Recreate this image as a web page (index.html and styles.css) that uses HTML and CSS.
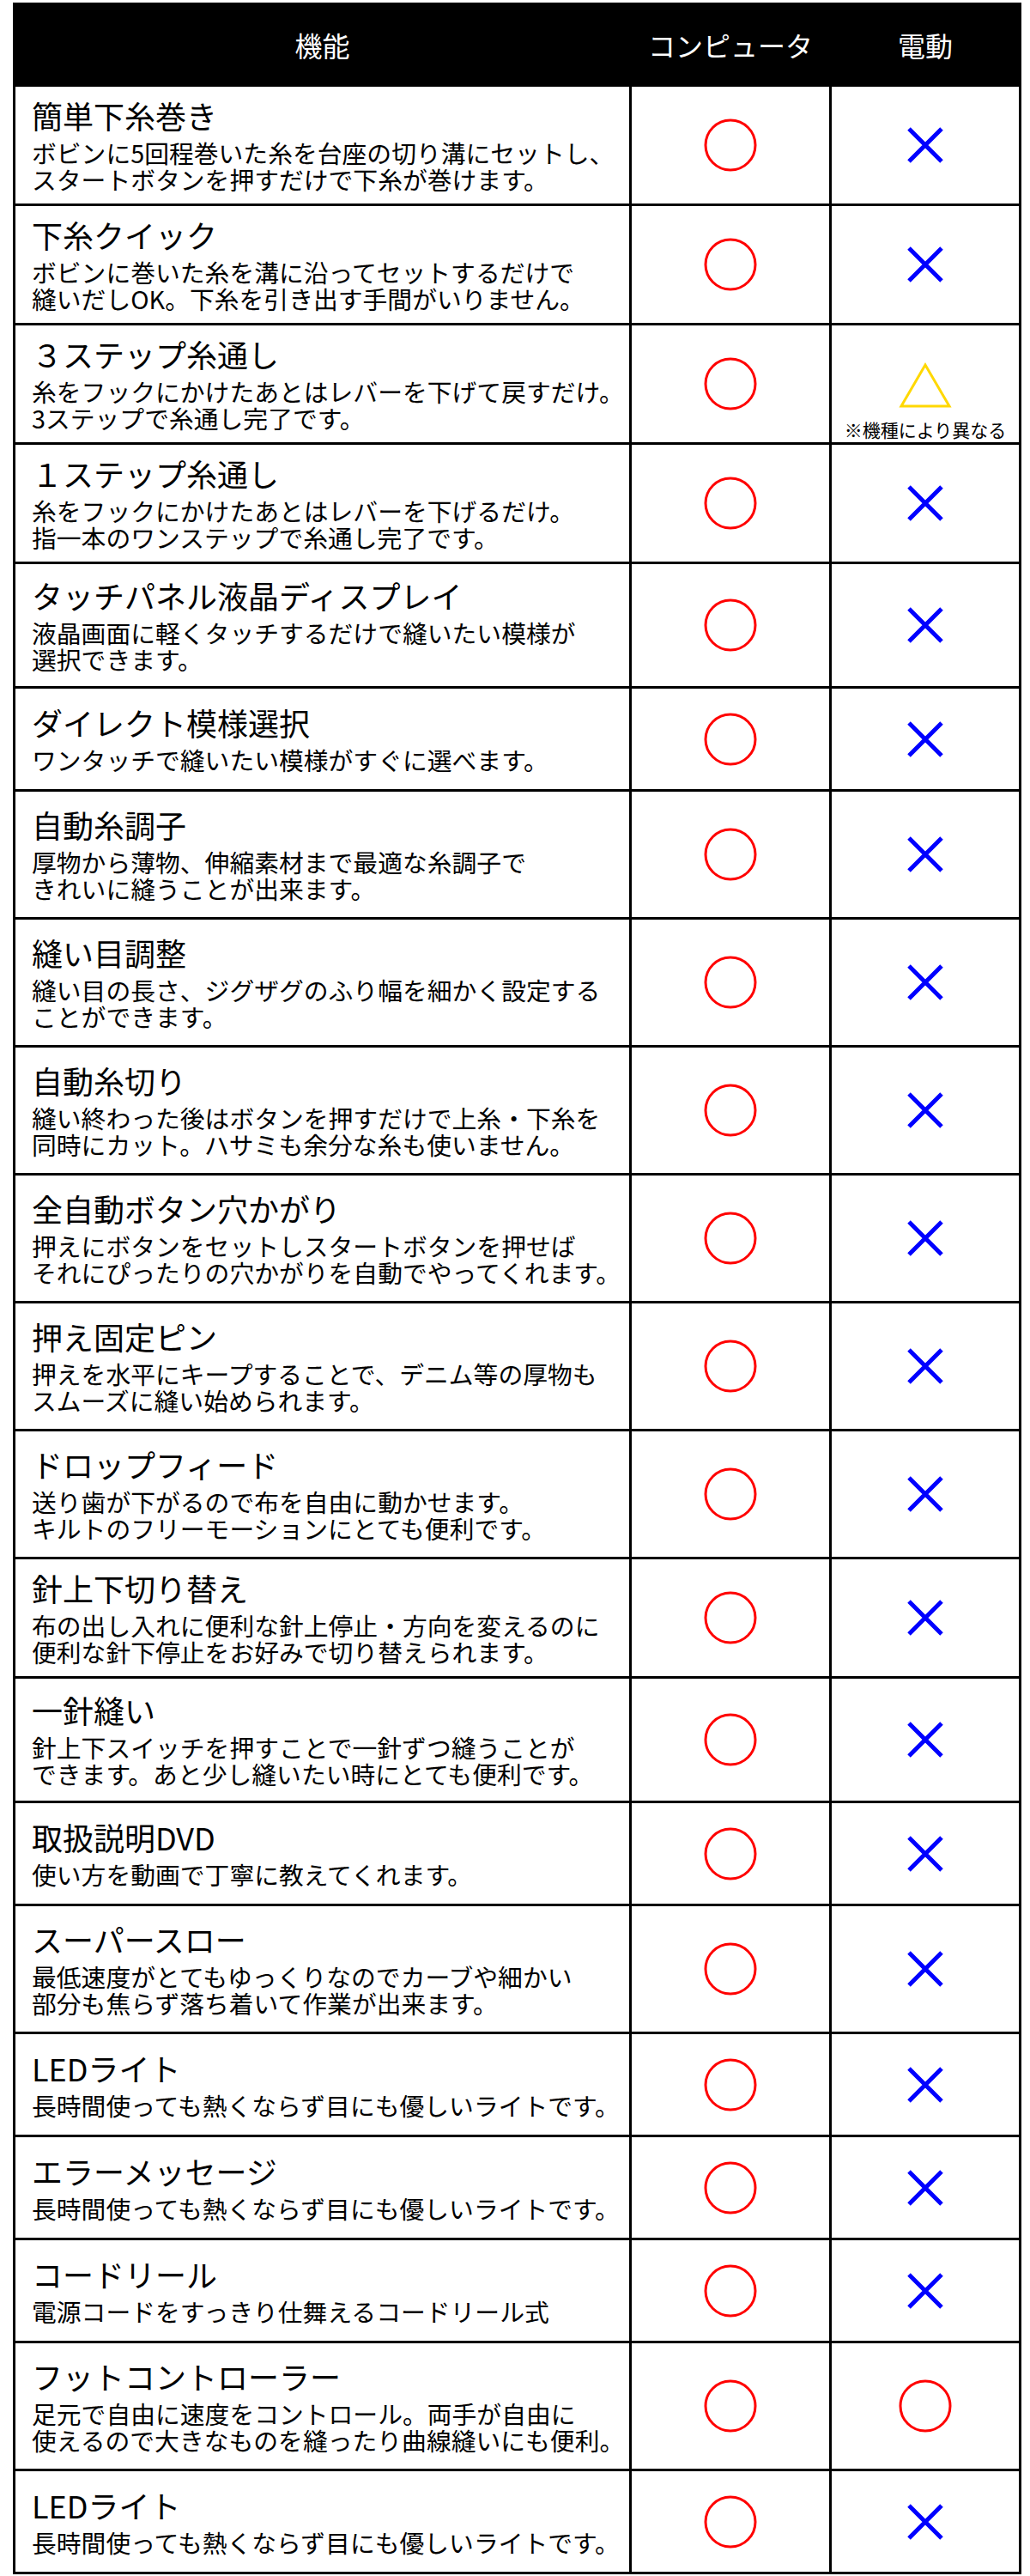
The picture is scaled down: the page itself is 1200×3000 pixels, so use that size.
FILE: index.html
```html
<!DOCTYPE html>
<html lang="ja">
<head>
<meta charset="utf-8">
<title>機能比較</title>
<link rel="stylesheet" href="styles.css">
</head>
<body>
<svg class="defs" width="0" height="0" aria-hidden="true">
  <defs>
    <symbol id="maru" viewBox="0 0 64 64"><circle cx="32" cy="32" r="29" fill="none" stroke="#ff0000" stroke-width="3"/></symbol>
    <symbol id="batsu" viewBox="0 0 44 44"><path d="M3 3 L41 41 M41 3 L3 41" fill="none" stroke="#0000ff" stroke-width="5"/></symbol>
    <symbol id="sankaku" viewBox="0 0 62 54"><polygon points="31,3 59,51 3,51" fill="none" stroke="#ffd800" stroke-width="3"/></symbol>
  </defs>
</svg>
<table class="spec">
  <colgroup><col class="c-feat"><col class="c-pc"><col class="c-el"></colgroup>
  <thead>
    <tr><th>機能</th><th>コンピュータ</th><th>電動</th></tr>
  </thead>
  <tbody>
    <tr class="tight"><td class="feat"><div class="name">簡単下糸巻き</div><div class="desc">ボビンに5回程巻いた糸を台座の切り溝にセットし、<br>スタートボタンを押すだけで下糸が巻けます。</div></td>
      <td class="mark"><svg class="o"><use href="#maru"/></svg></td><td class="mark"><svg class="x"><use href="#batsu"/></svg></td></tr>
    <tr class="tight"><td class="feat"><div class="name">下糸クイック</div><div class="desc">ボビンに巻いた糸を溝に沿ってセットするだけで<br>縫いだしOK。下糸を引き出す手間がいりません。</div></td>
      <td class="mark"><svg class="o"><use href="#maru"/></svg></td><td class="mark"><svg class="x"><use href="#batsu"/></svg></td></tr>
    <tr class="tight"><td class="feat"><div class="name">３ステップ糸通し</div><div class="desc">糸をフックにかけたあとはレバーを下げて戻すだけ。<br>3ステップで糸通し完了です。</div></td>
      <td class="mark"><svg class="o"><use href="#maru"/></svg></td><td class="mark partial"><div class="partial-box"><svg class="t"><use href="#sankaku"/></svg><span class="note">※機種により異なる</span></div></td></tr>
    <tr class="tight"><td class="feat"><div class="name">１ステップ糸通し</div><div class="desc">糸をフックにかけたあとはレバーを下げるだけ。<br>指一本のワンステップで糸通し完了です。</div></td>
      <td class="mark"><svg class="o"><use href="#maru"/></svg></td><td class="mark"><svg class="x"><use href="#batsu"/></svg></td></tr>
    <tr><td class="feat"><div class="name">タッチパネル液晶ディスプレイ</div><div class="desc">液晶画面に軽くタッチするだけで縫いたい模様が<br>選択できます。</div></td>
      <td class="mark"><svg class="o"><use href="#maru"/></svg></td><td class="mark"><svg class="x"><use href="#batsu"/></svg></td></tr>
    <tr><td class="feat"><div class="name">ダイレクト模様選択</div><div class="desc">ワンタッチで縫いたい模様がすぐに選べます。</div></td>
      <td class="mark"><svg class="o"><use href="#maru"/></svg></td><td class="mark"><svg class="x"><use href="#batsu"/></svg></td></tr>
    <tr class="loose"><td class="feat"><div class="name">自動糸調子</div><div class="desc">厚物から薄物、伸縮素材まで最適な糸調子で<br>きれいに縫うことが出来ます。</div></td>
      <td class="mark"><svg class="o"><use href="#maru"/></svg></td><td class="mark"><svg class="x"><use href="#batsu"/></svg></td></tr>
    <tr class="loose"><td class="feat"><div class="name">縫い目調整</div><div class="desc">縫い目の長さ、ジグザグのふり幅を細かく設定する<br>ことができます。</div></td>
      <td class="mark"><svg class="o"><use href="#maru"/></svg></td><td class="mark"><svg class="x"><use href="#batsu"/></svg></td></tr>
    <tr class="loose"><td class="feat"><div class="name">自動糸切り</div><div class="desc">縫い終わった後はボタンを押すだけで上糸・下糸を<br>同時にカット。ハサミも余分な糸も使いません。</div></td>
      <td class="mark"><svg class="o"><use href="#maru"/></svg></td><td class="mark"><svg class="x"><use href="#batsu"/></svg></td></tr>
    <tr class="loose"><td class="feat"><div class="name">全自動ボタン穴かがり</div><div class="desc">押えにボタンをセットしスタートボタンを押せば<br>それにぴったりの穴かがりを自動でやってくれます。</div></td>
      <td class="mark"><svg class="o"><use href="#maru"/></svg></td><td class="mark"><svg class="x"><use href="#batsu"/></svg></td></tr>
    <tr class="loose"><td class="feat"><div class="name">押え固定ピン</div><div class="desc">押えを水平にキープすることで、デニム等の厚物も<br>スムーズに縫い始められます。</div></td>
      <td class="mark"><svg class="o"><use href="#maru"/></svg></td><td class="mark"><svg class="x"><use href="#batsu"/></svg></td></tr>
    <tr class="loose"><td class="feat"><div class="name">ドロップフィード</div><div class="desc">送り歯が下がるので布を自由に動かせます。<br>キルトのフリーモーションにとても便利です。</div></td>
      <td class="mark"><svg class="o"><use href="#maru"/></svg></td><td class="mark"><svg class="x"><use href="#batsu"/></svg></td></tr>
    <tr class="tight"><td class="feat"><div class="name">針上下切り替え</div><div class="desc">布の出し入れに便利な針上停止・方向を変えるのに<br>便利な針下停止をお好みで切り替えられます。</div></td>
      <td class="mark"><svg class="o"><use href="#maru"/></svg></td><td class="mark"><svg class="x"><use href="#batsu"/></svg></td></tr>
    <tr><td class="feat"><div class="name">一針縫い</div><div class="desc">針上下スイッチを押すことで一針ずつ縫うことが<br>できます。あと少し縫いたい時にとても便利です。</div></td>
      <td class="mark"><svg class="o"><use href="#maru"/></svg></td><td class="mark"><svg class="x"><use href="#batsu"/></svg></td></tr>
    <tr><td class="feat"><div class="name">取扱説明DVD</div><div class="desc">使い方を動画で丁寧に教えてくれます。</div></td>
      <td class="mark"><svg class="o"><use href="#maru"/></svg></td><td class="mark"><svg class="x"><use href="#batsu"/></svg></td></tr>
    <tr class="loose"><td class="feat"><div class="name">スーパースロー</div><div class="desc">最低速度がとてもゆっくりなのでカーブや細かい<br>部分も焦らず落ち着いて作業が出来ます。</div></td>
      <td class="mark"><svg class="o"><use href="#maru"/></svg></td><td class="mark"><svg class="x"><use href="#batsu"/></svg></td></tr>
    <tr><td class="feat"><div class="name">LEDライト</div><div class="desc">長時間使っても熱くならず目にも優しいライトです。</div></td>
      <td class="mark"><svg class="o"><use href="#maru"/></svg></td><td class="mark"><svg class="x"><use href="#batsu"/></svg></td></tr>
    <tr><td class="feat"><div class="name">エラーメッセージ</div><div class="desc">長時間使っても熱くならず目にも優しいライトです。</div></td>
      <td class="mark"><svg class="o"><use href="#maru"/></svg></td><td class="mark"><svg class="x"><use href="#batsu"/></svg></td></tr>
    <tr><td class="feat"><div class="name">コードリール</div><div class="desc">電源コードをすっきり仕舞えるコードリール式</div></td>
      <td class="mark"><svg class="o"><use href="#maru"/></svg></td><td class="mark"><svg class="x"><use href="#batsu"/></svg></td></tr>
    <tr class="loose"><td class="feat"><div class="name">フットコントローラー</div><div class="desc">足元で自由に速度をコントロール。両手が自由に<br>使えるので大きなものを縫ったり曲線縫いにも便利。</div></td>
      <td class="mark"><svg class="o"><use href="#maru"/></svg></td><td class="mark"><svg class="o"><use href="#maru"/></svg></td></tr>
    <tr><td class="feat"><div class="name">LEDライト</div><div class="desc">長時間使っても熱くならず目にも優しいライトです。</div></td>
      <td class="mark"><svg class="o"><use href="#maru"/></svg></td><td class="mark"><svg class="x"><use href="#batsu"/></svg></td></tr>
  </tbody>
</table>
</body>
</html>
```
FILE: styles.css
```css
html, body {
  margin: 0;
  padding: 0;
  background: #ffffff;
}

body {
  font-family: "Noto Sans CJK JP", "Noto Sans", sans-serif;
  color: #000000;
}

.defs {
  position: absolute;
  width: 0;
  height: 0;
  overflow: hidden;
}

.spec {
  border-collapse: collapse;
  table-layout: fixed;
  width: 1172px;
  margin: 3px 0 0 15px;
}

.c-feat { width: 718px; }
.c-pc { width: 233px; }
.c-el { width: 221px; }

.spec th {
  background: #000000;
  color: #ffffff;
  font-weight: 400;
  font-size: 32px;
  line-height: 40px;
  height: 92px;
  padding: 0;
  border: 3px solid #000000;
  text-align: center;
  vertical-align: middle;
}

.spec td {
  border: 3px solid #000000;
  padding: 0;
}

.spec tbody tr {
  height: 120px;
}

.feat {
  padding: 14px 0 16px 19px !important;
  vertical-align: middle;
  text-align: left;
}

.tight .feat {
  padding-top: 11px !important;
  padding-bottom: 13px !important;
}

.loose .feat {
  padding-top: 16px !important;
  padding-bottom: 18px !important;
}

.name {
  font-size: 36px;
  line-height: 44px;
  white-space: nowrap;
}

.desc {
  font-size: 28.8px;
  line-height: 31px;
  margin-top: 6px;
  white-space: nowrap;
}

.mark {
  text-align: center;
  vertical-align: middle;
}

.mark svg {
  display: block;
  margin: 0 auto;
}

.o {
  width: 64px;
  height: 64px;
}

.x {
  width: 44px;
  height: 44px;
}

.partial {
  vertical-align: bottom !important;
}

.partial-box {
  display: flex;
  flex-direction: column;
  align-items: center;
  gap: 12px;
  padding-bottom: 3px;
}

.t {
  width: 62px;
  height: 54px;
}

.note {
  font-size: 21px;
  line-height: 24px;
  white-space: nowrap;
}
```
